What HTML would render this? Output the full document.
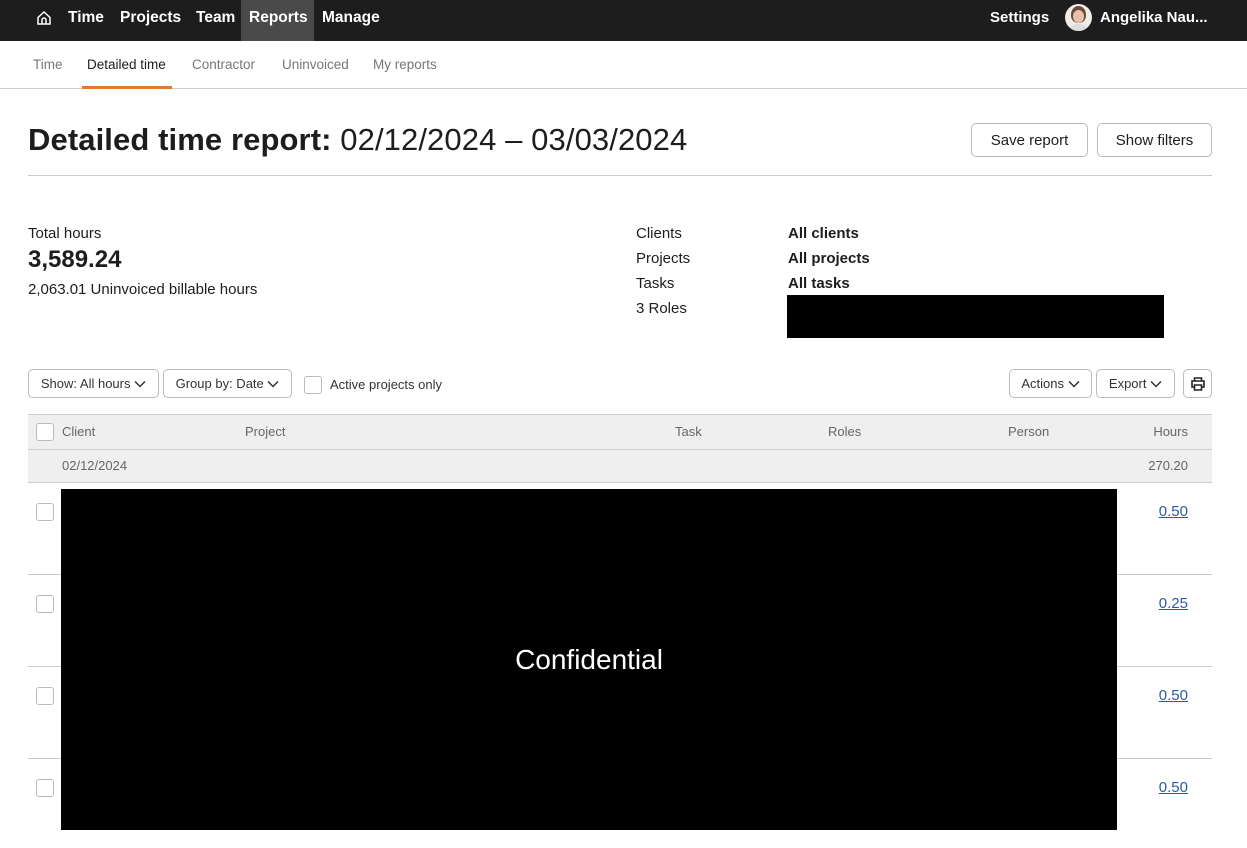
<!DOCTYPE html>
<html><head><meta charset="utf-8"><style>
*{box-sizing:border-box;margin:0;padding:0}
body{width:1247px;height:848px;overflow:hidden;background:#fff;font-family:"Liberation Sans",sans-serif;color:#1d1d1d;position:relative}
.a{position:absolute;white-space:nowrap}
.top{position:absolute;left:0;top:0;width:1247px;height:41px;background:#1d1d1d}
.nav{color:#fff;font-weight:bold;font-size:15.5px;top:9px}
.sub{font-size:13.5px;color:#777;top:57px}
.btn{position:absolute;border:1px solid #bbb;border-radius:5px;background:#fff;font-size:13px;color:#333;display:flex;align-items:center;justify-content:center}
.cb{position:absolute;width:18px;height:18px;border:1px solid #bbb;border-radius:3px;background:#fff}
.th{font-size:13px;color:#666;top:424px}
.lnk{font-size:15px;color:#2a5ba8;text-decoration:underline;right:59px}
.hl{position:absolute;left:28px;width:1184px;height:1px;background:#ccc}
</style></head><body>
<div class="top"></div>
<div class="a" style="left:241px;top:0;width:73px;height:41px;background:#4a4a4a"></div>
<svg class="a" style="left:36px;top:10px" width="16" height="16" viewBox="0 0 16 16" fill="none" stroke="#fff" stroke-width="1.5"><path d="M2 7.5L8 2l6 5.5V14H2z"/><path d="M6 14V10a2 2 0 0 1 4 0v4"/></svg>
<div class="a nav" style="left:68px">Time</div>
<div class="a nav" style="left:120px">Projects</div>
<div class="a nav" style="left:196px">Team</div>
<div class="a nav" style="left:249px">Reports</div>
<div class="a nav" style="left:322px">Manage</div>
<div class="a nav" style="left:990px;font-size:15px">Settings</div>
<div class="a" style="left:1065px;top:4px;width:27px;height:27px;border-radius:50%;background:#f2ece6;overflow:hidden"><div style="position:absolute;left:6px;top:2px;width:15px;height:17px;border-radius:50% 50% 45% 45%;background:#6b4a3a"></div><div style="position:absolute;left:8px;top:6px;width:11px;height:13px;border-radius:50%;background:#e8c2a8"></div><div style="position:absolute;left:5px;top:20px;width:17px;height:10px;border-radius:50% 50% 0 0;background:#ddd"></div></div>
<div class="a nav" style="left:1100px;font-size:15px">Angelika Nau...</div>
<div class="a sub" style="left:33px">Time</div>
<div class="a sub" style="left:87px;color:#1d1d1d">Detailed time</div>
<div class="a sub" style="left:192px">Contractor</div>
<div class="a sub" style="left:282px">Uninvoiced</div>
<div class="a sub" style="left:373px">My reports</div>
<div class="a" style="left:0;top:88px;width:1247px;height:1px;background:#ccc"></div>
<div class="a" style="left:82px;top:86px;width:90px;height:3px;background:#e5792b"></div>
<div class="a" style="left:28px;top:122px;font-size:31px;font-weight:bold;letter-spacing:0.1px">Detailed time report: <span style="font-weight:normal">02/12/2024 – 03/03/2024</span></div>
<div class="btn" style="left:971px;top:123px;width:117px;height:34px;font-size:15px;color:#1d1d1d">Save report</div>
<div class="btn" style="left:1097px;top:123px;width:115px;height:34px;font-size:15px;color:#1d1d1d">Show filters</div>
<div class="hl" style="top:175px"></div>
<div class="a" style="left:28px;top:225px;font-size:15px">Total hours</div>
<div class="a" style="left:28px;top:246px;font-size:24px;font-weight:bold">3,589.24</div>
<div class="a" style="left:28px;top:281px;font-size:15px">2,063.01 Uninvoiced billable hours</div>
<div class="a" style="left:636px;top:221px;font-size:15px;line-height:25px">Clients<br>Projects<br>Tasks<br>3 Roles</div>
<div class="a" style="left:788px;top:221px;font-size:15px;line-height:25px;font-weight:bold">All clients<br>All projects<br>All tasks</div>
<div class="a" style="left:787px;top:295px;width:377px;height:43px;background:#000"></div>
<div class="btn" style="left:28px;top:369px;width:131px;height:29px">Show: All hours&nbsp;<svg width="12" height="8" viewBox="0 0 12 8" fill="none" stroke="#333" stroke-width="1.5"><path d="M1 1.5l5 5 5-5"/></svg></div>
<div class="btn" style="left:163px;top:369px;width:129px;height:29px">Group by: Date&nbsp;<svg width="12" height="8" viewBox="0 0 12 8" fill="none" stroke="#333" stroke-width="1.5"><path d="M1 1.5l5 5 5-5"/></svg></div>
<div class="cb" style="left:304px;top:376px"></div>
<div class="a" style="left:330px;top:377px;font-size:13px;color:#333">Active projects only</div>
<div class="btn" style="left:1009px;top:369px;width:83px;height:29px">Actions&nbsp;<svg width="12" height="8" viewBox="0 0 12 8" fill="none" stroke="#333" stroke-width="1.5"><path d="M1 1.5l5 5 5-5"/></svg></div>
<div class="btn" style="left:1096px;top:369px;width:79px;height:29px">Export&nbsp;<svg width="12" height="8" viewBox="0 0 12 8" fill="none" stroke="#333" stroke-width="1.5"><path d="M1 1.5l5 5 5-5"/></svg></div>
<div class="btn" style="left:1183px;top:369px;width:29px;height:29px"><svg width="16" height="16" viewBox="0 0 16 16" fill="none" stroke="#222" stroke-width="1.6"><path d="M4.5 5V2h7v3M4.5 11H2V5h12v6h-2.5M4.5 9h7v5h-7z"/></svg></div>
<div class="a" style="left:28px;top:414px;width:1184px;height:69px;background:#efefef;border-top:1px solid #ccc;border-bottom:1px solid #ccc"></div>
<div class="hl" style="top:449px"></div>
<div class="cb" style="left:36px;top:423px"></div>
<div class="a th" style="left:62px">Client</div>
<div class="a th" style="left:245px">Project</div>
<div class="a th" style="left:675px">Task</div>
<div class="a th" style="left:828px">Roles</div>
<div class="a th" style="left:1008px">Person</div>
<div class="a th" style="right:59px">Hours</div>
<div class="a th" style="left:62px;top:458px">02/12/2024</div>
<div class="a th" style="right:59px;top:458px">270.20</div>
<div class="hl" style="top:574px"></div>
<div class="hl" style="top:666px"></div>
<div class="hl" style="top:758px"></div>
<div class="cb" style="left:36px;top:503px"></div>
<div class="cb" style="left:36px;top:595px"></div>
<div class="cb" style="left:36px;top:687px"></div>
<div class="cb" style="left:36px;top:779px"></div>
<div class="a lnk" style="top:503px">0.50</div>
<div class="a lnk" style="top:595px">0.25</div>
<div class="a lnk" style="top:687px">0.50</div>
<div class="a lnk" style="top:779px">0.50</div>
<div class="a" style="left:61px;top:489px;width:1056px;height:341px;background:#000;color:#fff;font-size:28px;display:flex;align-items:center;justify-content:center">Confidential</div>
</body></html>
